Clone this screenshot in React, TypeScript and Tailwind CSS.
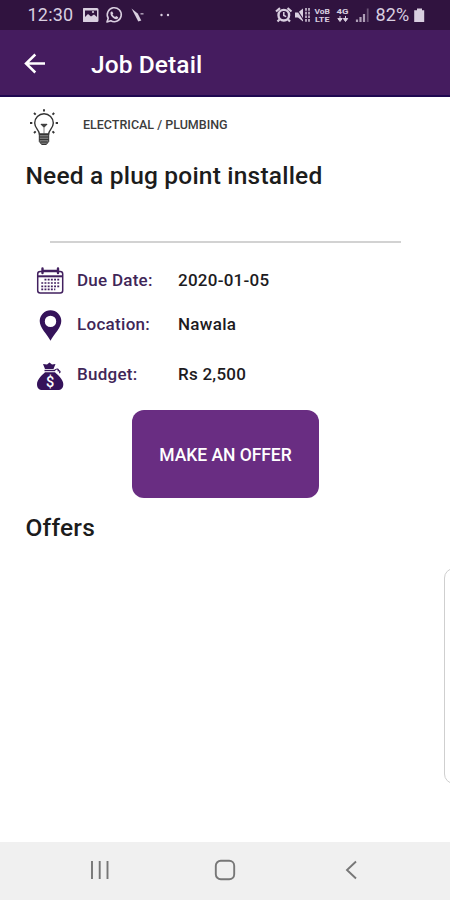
import React from 'react';

function StatusBar() {
  return (
    <div className="flex h-[30px] items-center bg-[#30133f] pl-[27.5px] text-[#d9cfe0]">
      <span className="w-[55.5px] text-[18px] leading-[30px] tracking-[0.2px]">12:30</span>
      <svg className="h-[30px] w-[96px] shrink-0" viewBox="83 0 96 30" fill="none">
        <path fillRule="evenodd" d="M84 8h13q1.500 0 1.500 1.500v11q0 1.500-1.500 1.500H84q-1.500 0-1.500-1.500v-11Q82.500 8 84 8zm1 2.500v6.500l3-3 3 2.500 3-2 3 2.500v-6.500z" fill="currentColor" />
        <circle cx="93" cy="12" r="1.100" fill="currentColor" />
        <path d="M107 22l1.200-3.800a7 7 0 1 1 2.600 2.600z" stroke="currentColor" strokeWidth="1.600" strokeLinejoin="round" />
        <path d="M110.500 12.200l1.500-1 1.300 2.300-.8 1.100q.9 1.700 2.600 2.300l1.100-.9 2.100 1.300-.7 1.500q-1.500 1.100-4.300-.8-3.200-2.400-2.800-5.800z" fill="currentColor" />
        <path d="M131.500 8.500l6.800 13 3-1-3.600-7z" fill="currentColor" />
        <path d="M140.500 13.800h3" stroke="currentColor" strokeWidth="1.600" opacity=".7" />
        <circle cx="161.500" cy="15" r="1.200" fill="currentColor" />
        <circle cx="168" cy="15" r="1.200" fill="currentColor" />
      </svg>
      <svg className="ml-[96px] h-[30px] w-[100px] shrink-0" viewBox="275 0 100 30" fill="none">
        <path d="M276 11.500l4-3.300M291.500 11.500l-4-3.300M279.500 19.500l-2 2M288 19.500l2 2" stroke="currentColor" strokeWidth="2.200" />
        <circle cx="283.800" cy="15.200" r="5.300" stroke="currentColor" strokeWidth="2.400" />
        <path d="M283.800 12v3.500l2.400 1.200" stroke="currentColor" strokeWidth="1.500" />
        <path d="M295 12.500h3l5-4v13l-5-4h-3z" fill="currentColor" />
        <path d="M296 8l8.500 13.500" stroke="#30133f" strokeWidth="1.100" />
        <path d="M306 8v14M309 8v14" stroke="currentColor" strokeWidth="1.500" strokeDasharray="2.700 1" />
        <g fill="currentColor" fontFamily="Roboto, sans-serif" fontWeight="700" fontSize="7.500">
          <text x="314.500" y="13.700" textLength="15.500" lengthAdjust="spacingAndGlyphs">VoB</text>
          <text x="315" y="22.200" textLength="14.500" lengthAdjust="spacingAndGlyphs">LTE</text>
          <text x="336.500" y="14" textLength="12" lengthAdjust="spacingAndGlyphs">4G</text>
        </g>
        <path d="M340 16v4M337.800 18.500l2.200 3 2.200-3zM345.500 16v4M343.300 18.500l2.200 3 2.200-3z" fill="currentColor" stroke="currentColor" strokeWidth="1" />
        <path d="M357 22v-2.500M360.500 22v-5M364 22v-8" stroke="currentColor" strokeWidth="2.200" opacity=".75" />
        <path d="M367.700 22V8.500" stroke="currentColor" strokeWidth="1.800" opacity=".35" />
      </svg>
      <span className="w-[38px] pl-[0.5px] text-[18px] leading-[30px] tracking-[0.1px]">82%</span>
      <svg className="h-[30px] w-[14px] shrink-0" viewBox="413 0 14 30">
        <path d="M417 8.500h5v1.700h2.200V22h-10V10.200h2.800z" fill="currentColor" />
      </svg>
    </div>
  );
}

function AppBar() {
  return (
    <header className="flex h-[67px] items-center border-b-2 border-[#1f0850] bg-[#451c5f] pl-[24px] text-white">
      <svg className="h-[24px] w-[22px]" viewBox="0 0 22 24" fill="none" stroke="currentColor" strokeWidth="2.500">
        <path d="M21 12.500H2M11.300 3.500L2 12.500l9.300 9" />
      </svg>
      <h1 className="ml-[45px] pt-[4px] text-[24.5px] font-medium leading-[28px] tracking-[0.1px]">Job Detail</h1>
    </header>
  );
}

function BulbIcon() {
  return (
    <svg className="h-[38px] w-[30px] shrink-0" viewBox="29 108 30 38" fill="none" stroke="#333" strokeWidth="1.400">
      <path d="M39.300 134c0-4-4.600-5.500-4.600-11a9.300 9.300 0 0 1 18.600 0c0 5.500-4.600 7-4.600 11z" />
      <path d="M41 124.300h6l-3 3z" fill="#444" strokeWidth="1" />
      <path d="M44 127.500v6" strokeWidth=".6" />
      <path d="M39.300 134.500h9.400v7l-2.400 3h-4.600l-2.400-3z" fill="#777" strokeWidth="1" />
      <path d="M39.300 137h9.400M39.300 139.500h9.400M40.500 142h7" strokeWidth="1.100" />
      <path d="M44 109.300v2.200M34 113l1.700 1.700M54.200 113l-1.700 1.700M30 123h2.300M55.700 123H58M34 133l1.700-1.700M54.200 133l-1.700-1.700" strokeWidth="1.900" />
    </svg>
  );
}

function CalendarIcon() {
  return (
    <svg className="h-[28px] w-[28px]" viewBox="0 0 28 28" fill="none" stroke="#42205f">
      <rect x="1.700" y="4.500" width="25" height="21.500" rx="2.500" strokeWidth="1.500" />
      <path d="M2 9.300h24.500" strokeWidth="2" />
      <path d="M6.500 1.500v4.500M22 1.500v4.500" strokeWidth="2.400" strokeLinecap="round" />
      <path d="M7 3.500h14" strokeWidth="1.500" />
      <path d="M8.500 12.700h15.500M5.300 16h19M5.300 19.300h19M5.300 22.300h14" strokeWidth="1.700" strokeDasharray="1.900 1.300" />
    </svg>
  );
}

function PinIcon() {
  return (
    <svg className="h-[32px] w-[28px]" viewBox="0 0 28 32">
      <path fillRule="evenodd" d="M14.500 1.300a10.800 10.800 0 0 0-10.800 10.800c0 7 7.300 13 10.800 19.700 3.500-6.700 10.800-12.700 10.800-19.700A10.800 10.800 0 0 0 14.500 1.300zm0 5.400a5.700 5.700 0 1 1 0 11.400 5.700 5.700 0 0 1 0-11.400z" fill="#35135a" />
    </svg>
  );
}

function MoneyIcon() {
  return (
    <svg className="h-[30px] w-[28px]" viewBox="0 0 28 30">
      <path d="M9 11.200h10c2 2 8.300 6.800 8.300 11.800 0 4-2 6-5.500 6h-15.300C3 29 1 27 1 23c0-5 6-9.800 8-11.800z" fill="#35135a" />
      <path d="M7 3l4 .5L13.500 1.500l2.500 2 3.500-.5-2 5h-8.500z" fill="#35135a" />
      <path d="M8.500 9.500h10.500" stroke="#35135a" strokeWidth="1.400" />
      <path d="M18.500 9.700c2-2.700 4.500-1.700 3.700 0 2 0 2.500 1.500 1 2.300" stroke="#35135a" fill="none" strokeWidth="1.200" />
      <text x="14.200" y="25.700" textAnchor="middle" fontSize="14.500" fontWeight="500" fill="#fff" fontFamily="Roboto, sans-serif">$</text>
    </svg>
  );
}

type DetailProps = {
  icon: React.ReactNode;
  label: string;
  value: string;
  height: string;
  textStyle: string;
};

function Detail({ icon, label, value, height, textStyle }: DetailProps) {
  return (
    <div className={`flex items-center pl-[36px] text-[17px] font-medium ${height}`}>
      <div className="w-[41px]">{icon}</div>
      <span className={`w-[101px] whitespace-nowrap text-[#3f2658] ${textStyle}`}>{label}</span>
      <span className={`whitespace-nowrap text-[#1d1b1e] ${textStyle}`}>{value}</span>
    </div>
  );
}

function NavigationBar() {
  return (
    <nav className="flex h-[58px] items-center bg-[#f0f0f0] pb-[2px] pl-[89px] text-[#777]">
      <svg className="h-[20px] w-[21px]" viewBox="0 0 21 20" stroke="currentColor" strokeWidth="1.900">
        <path d="M3 1v18M10.700 1v18M18.500 1v18" />
      </svg>
      <svg className="ml-[104px] h-[22px] w-[22px]" viewBox="0 0 22 22" fill="none" stroke="currentColor" strokeWidth="1.900">
        <rect x="1.800" y="1.800" width="18.400" height="18.400" rx="5" />
      </svg>
      <svg className="ml-[109px] h-[20px] w-[13px]" viewBox="0 0 13 20" fill="none" stroke="currentColor" strokeWidth="1.900">
        <path d="M11 1.500L2 10l9 8.500" />
      </svg>
    </nav>
  );
}

export default function App() {
  return (
    <div className="relative flex h-[900px] w-[450px] flex-col overflow-hidden bg-white font-[Roboto,sans-serif]">
      <StatusBar />
      <AppBar />
      <main className="flex flex-1 flex-col">
        <div className="flex h-[60px] items-center pl-[29px]">
          <BulbIcon />
          <span className="mb-[5px] ml-[24px] text-[12.5px] font-medium leading-[16px] text-[#3c3c3c]">ELECTRICAL / PLUMBING</span>
        </div>
        <h2 className="h-[84px] pl-[25.5px] pt-[5px] text-[24.5px] font-medium leading-[28px] tracking-[0.2px] text-[#1c1c1c]">Need a plug point installed</h2>
        <div className="mx-[50px] h-[2px] w-[351px] bg-[#d2d2d2]" />
        <div className="flex flex-col pt-[15px]">
          <Detail icon={<CalendarIcon />} label="Due Date:" value="2020-01-05" height="h-[45px]" textStyle="tracking-[0.25px]" />
          <Detail icon={<PinIcon />} label="Location:" value="Nawala" height="h-[44px]" textStyle="tracking-[0.3px]" />
          <Detail icon={<MoneyIcon />} label="Budget:" value="Rs 2,500" height="h-[57px]" textStyle="pb-[2px] tracking-[0.25px]" />
        </div>
        <button className="ml-[132px] mt-[6px] h-[88px] w-[187px] rounded-[12px] bg-[#692d82] pt-[2px] text-[17.5px] font-medium tracking-[-0.05px] text-white">MAKE AN OFFER</button>
        <h2 className="pl-[25.5px] pt-[16px] text-[24.5px] font-medium leading-[28px] tracking-[0.2px] text-[#1c1c1c]">Offers</h2>
      </main>
      <NavigationBar />
      <div className="absolute left-[444px] top-[568px] h-[216px] w-[40px] rounded-[10px] border border-[#cfcfcf] bg-white" />
    </div>
  );
}
